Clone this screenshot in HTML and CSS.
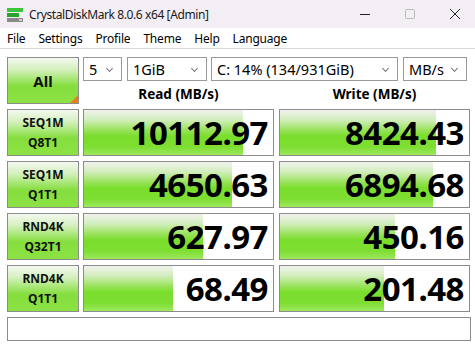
FILE: index.html
```html
<!DOCTYPE html>
<html>
<head>
<meta charset="utf-8">
<link rel="stylesheet" href="styles.css">
</head>
<body>
<div class="window">
  <div class="titlebar">
    <svg class="app-icon" width="16" height="16" viewBox="0 0 16 16">
      <rect x="0" y="1" width="16" height="4" fill="#3cc43c"/>
      <rect x="0" y="6" width="12" height="4" fill="#2aa52a"/>
      <rect x="0" y="11" width="16" height="4" fill="#8a8a8a"/>
      <rect x="12" y="12" width="3" height="2" fill="#cfcfcf"/>
    </svg>
    <span class="title">CrystalDiskMark 8.0.6 x64 [Admin]</span>
    <div class="controls">
      <svg width="12" height="12" viewBox="0 0 12 12"><line x1="1" y1="6.5" x2="11" y2="6.5" stroke="#222" stroke-width="1"/></svg>
      <svg width="12" height="12" viewBox="0 0 12 12"><rect x="1.5" y="1.5" width="9" height="9" rx="1" fill="none" stroke="#bbb" stroke-width="1"/></svg>
      <svg width="12" height="12" viewBox="0 0 12 12"><path d="M1 1 L11 11 M11 1 L1 11" stroke="#222" stroke-width="1" fill="none"/></svg>
    </div>
  </div>
  <div class="menubar">
    <span>File</span><span>Settings</span><span>Profile</span><span>Theme</span><span>Help</span><span>Language</span>
  </div>
  <div class="main">
    <div class="top">
      <div class="btn all">All<span class="corner"></span></div>
      <div class="topright">
        <div class="selects">
          <div class="sel s1">5<span class="chev"></span></div>
          <div class="sel s2">1GiB<span class="chev"></span></div>
          <div class="sel s3">C: 14% (134/931GiB)<span class="chev"></span></div>
          <div class="sel s4">MB/s<span class="chev"></span></div>
        </div>
        <div class="heads">
          <div class="head">Read (MB/s)</div>
          <div class="head">Write (MB/s)</div>
        </div>
      </div>
    </div>
    <div class="rows">
      <div class="row">
        <div class="btn label">SEQ1M<br>Q8T1</div>
        <div class="cell read"><div class="bar" style="width:159px"></div><span class="val">10112.97</span></div>
        <div class="cell write"><div class="bar" style="width:156px"></div><span class="val">8424.43</span></div>
      </div>
      <div class="row">
        <div class="btn label">SEQ1M<br>Q1T1</div>
        <div class="cell read"><div class="bar" style="width:148px"></div><span class="val">4650.63</span></div>
        <div class="cell write"><div class="bar" style="width:153px"></div><span class="val">6894.68</span></div>
      </div>
      <div class="row">
        <div class="btn label">RND4K<br>Q32T1</div>
        <div class="cell read"><div class="bar" style="width:119px"></div><span class="val">627.97</span></div>
        <div class="cell write"><div class="bar" style="width:115px"></div><span class="val">450.16</span></div>
      </div>
      <div class="row">
        <div class="btn label">RND4K<br>Q1T1</div>
        <div class="cell read"><div class="bar" style="width:89px"></div><span class="val">68.49</span></div>
        <div class="cell write"><div class="bar" style="width:104px"></div><span class="val">201.48</span></div>
      </div>
    </div>
    <div class="status"></div>
  </div>
</div>
</body>
</html>
```

FILE: styles.css
```css
* { box-sizing: border-box; }
html, body { margin: 0; padding: 0; background: #ffffff; }
body { font-family: "Noto Sans", "Open Sans", sans-serif; color: #000; width: 475px; height: 346px; overflow: hidden; }

.titlebar {
  height: 28px;
  background: #f3eef3;
  display: flex;
  align-items: center;
  padding-left: 7px;
}
.app-icon { flex: none; margin-top: 1px; }
.title { font-size: 12px; margin-left: 6px; color: #1a1a1a; letter-spacing: -0.4px; }
.controls { margin-left: auto; display: flex; gap: 33px; padding-right: 14px; align-items: center; }

.menubar {
  height: 21px;
  border-bottom: 1px solid #d8d8d8;
  display: flex;
  align-items: center;
  padding-left: 7px;
  font-size: 12px;
  letter-spacing: -0.2px;
}
.menubar span { margin-right: 13px; }

.main { padding: 8px 0 0 7px; }

.top { display: flex; height: 47px; }
.btn {
  border: 1px solid #8c8c8c;
  background: linear-gradient(to bottom, #f4f9f0 0%, #d6f0c0 25%, #a4e670 48%, #86de3e 62%, #8ce244 100%);
  display: flex;
  align-items: center;
  justify-content: center;
  text-align: center;
  font-weight: bold;
  color: #111;
}
.all { width: 72px; height: 47px; font-size: 15px; position: relative; }
.corner {
  position: absolute; right: 0; bottom: 0;
  width: 0; height: 0;
  border-left: 8px solid transparent;
  border-bottom: 8px solid #f07c1a;
}
.topright { margin-left: 4px; display: flex; flex-direction: column; }
.selects { display: flex; height: 24px; }
.sel {
  height: 24px;
  border: 1px solid #9a9a9a;
  background: #fff;
  font-size: 14.5px;
  display: flex;
  align-items: center;
  padding-left: 5px;
  position: relative;
  line-height: 1;
}
.s1 { width: 39px; }
.s2 { width: 80px; margin-left: 5px; }
.s3 { width: 187px; margin-left: 4px; }
.s4 { width: 64px; margin-left: 5px; }
.chev {
  position: absolute; right: 9px; top: 8px;
  width: 5px; height: 5px;
  border-right: 1px solid #777;
  border-bottom: 1px solid #777;
  transform: rotate(45deg);
}
.heads { display: flex; margin-top: 4px; height: 19px; }
.head { width: 191px; text-align: center; font-weight: bold; font-size: 13.5px; line-height: 19px; }
.head + .head { margin-left: 5px; }

.rows { display: flex; flex-direction: column; gap: 5px; margin-top: 5px; }
.row { display: flex; height: 47px; }
.label { width: 72px; height: 47px; font-size: 12px; line-height: 20px; }
.cell {
  width: 191px; height: 47px;
  border: 1px solid #8c8c8c;
  background: #fff;
  position: relative;
  display: flex;
  align-items: center;
  justify-content: flex-end;
}
.read { margin-left: 4px; }
.write { margin-left: 5px; }
.bar {
  position: absolute; left: 0; top: 0; bottom: 0;
  background: linear-gradient(to bottom, #f2f2ee 0%, #d2eebc 22%, #98e25a 45%, #7ade2c 58%, #7ede32 82%, #9ce85e 100%);
}
.val {
  position: relative;
  font-weight: bold;
  font-size: 33px;
  letter-spacing: -0.5px;
  padding-right: 5px;
  line-height: 1;
  color: #000;
}
.status {
  margin-top: 5px;
  width: 464px; height: 24px;
  border: 1px solid #8c8c8c;
  background: #fff;
}
```
